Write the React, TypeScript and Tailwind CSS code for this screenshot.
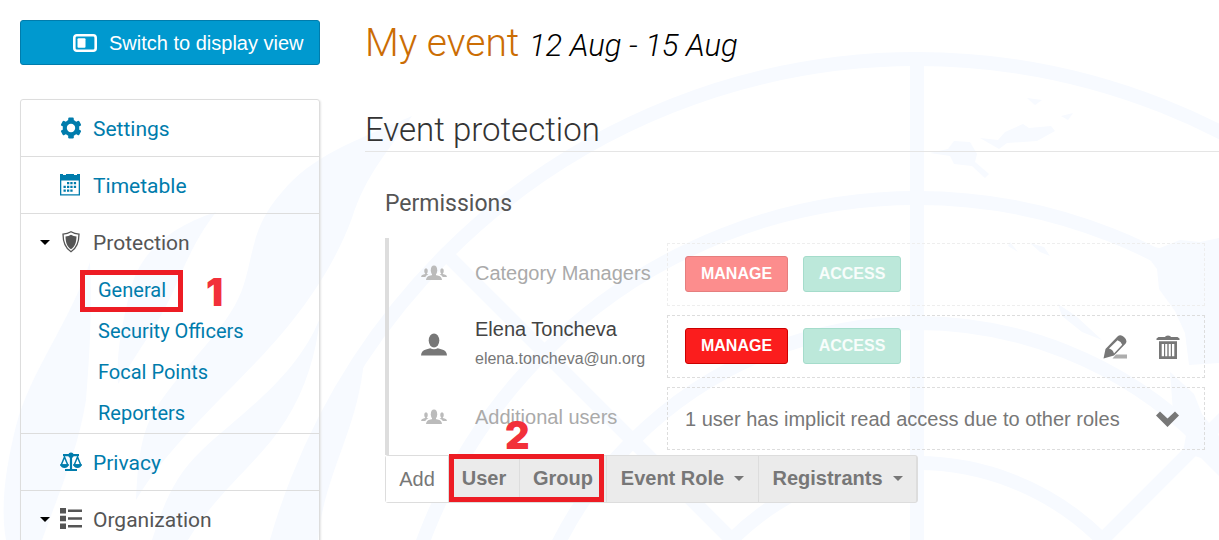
import type { ReactNode } from 'react'

interface IconProps {
  className?: string
}

const WATERMARK = '#f7faff'

function Emblem() {
  return (
    <svg
      className="absolute left-0 top-0 -z-10"
      width="1219"
      height="540"
      viewBox="0 0 1219 540"
      fill="none"
      stroke={WATERMARK}
      strokeWidth="14"
      aria-hidden="true"
    >
      {/* globe */}
      <circle cx="917" cy="725" r="666" />
      <circle cx="917" cy="725" r="527" />
      <circle cx="917" cy="725" r="402" />
      <circle cx="917" cy="725" r="262" />
      <path d="M917 59V540M446 254L732 540M1388 254L1102 540" />
      {/* land */}
      <g fill={WATERMARK} stroke="none">
        <path d="M930 153l18-4 6-8 16 1 7 12-2 8 14 12-4 4-13-12-18-2-4-8z" />
        <path d="M980 138l18 2 7-8 18-8 6 4 22-2 4 5-18 10-30 2-8 6z" />
        <path d="M1027 98l15 2-7 5zM1061 116l12-3-5 7z" />
        <path d="M1140 246l20 2 20-8 20 2 19-4V363l-30 2-4-32-10-22-16-22-2-20z" />
        <path d="M1170 372l24 22 8 20 17 22v40l-18-18-18-6 4-22-14-18z" />
        <path d="M1058 304l18 12 26 24-20-8-20-16zM1010 242l8 10-10-6zM1030 243l14 4 6 9-10-4z" />
      </g>
      {/* olive branch */}
      <g fill={WATERMARK} stroke="none">
        <path d="M412 116c-60 26-100 40-130 76-30 34-28 60-38 92-12 40-50 70-84 118-20 28-22 60-24 98 30-50 80-96 124-142 30-32 70-80 92-140 14-44 36-66 60-102z" />
        <path d="M216 212c-50 16-78 44-86 80-8 32-14 60-12 92 22-36 40-60 54-90 14-32 24-56 44-82z" />
        <path d="M90 262c-20 60-60 110-74 164-10 40-16 80-10 114h36c18-50 36-90 44-140 4-50 6-90 4-138z" />
        <path d="M320 318c-24 60-80 96-118 132-30 28-40 60-50 90h36c30-50 72-78 98-120 20-32 30-66 34-102z" />
        <path d="M364 360c-30 40-44 90-62 120-10 20-16 40-18 60h34c6-66 40-110 46-180z" />
      </g>
    </svg>
  )
}

function DisplayIcon() {
  return (
    <svg width="24" height="18" viewBox="0 0 24 18" aria-hidden="true">
      <rect x="1.3" y="1.3" width="21.400" height="15.400" rx="2.500" fill="none" stroke="currentColor" strokeWidth="2.600" />
      <rect x="4.500" y="4.300" width="8" height="9.400" rx="1" fill="currentColor" />
    </svg>
  )
}

function GearIcon() {
  return (
    <svg width="22" height="22" viewBox="0 0 22 22" aria-hidden="true">
      <g fill="currentColor">
        <rect x="8.200" y=".5" width="5.600" height="21" rx="1.200" />
        <rect x="8.200" y=".5" width="5.600" height="21" rx="1.200" transform="rotate(60 11 11)" />
        <rect x="8.200" y=".5" width="5.600" height="21" rx="1.200" transform="rotate(120 11 11)" />
        <circle cx="11" cy="11" r="8.300" />
      </g>
      <circle cx="11" cy="11" r="4.200" fill="#fff" />
    </svg>
  )
}

function CalendarIcon() {
  return (
    <svg width="22" height="22" viewBox="0 0 22 22" fill="currentColor" aria-hidden="true">
      <path d="M0 0h3v1h3V0h8v1h3V0h3v6H0z" />
      <path fillRule="evenodd" d="M0 6h20v15.500H0zM1.300 6.500v13.700h17.400V6.500z" />
      <path d="M7 8h2.300v2.300H7zM10.300 8h2.300v2.300h-2.300zM13.800 8h2.300v2.300h-2.300zM3.500 11.700h2.300V14H3.500zM7 11.700h2.300V14H7zM10.300 11.700h2.300V14h-2.300zM13.800 11.700h2.300V14h-2.300zM3.500 15.400h2.300v2.300H3.500zM7 15.400h2.300v2.300H7zM10.300 15.400h2.300v2.300h-2.300z" />
    </svg>
  )
}

function ShieldIcon() {
  return (
    <svg width="22" height="22" viewBox="0 0 22 22" aria-hidden="true">
      <path d="M11 .8Q7.500 2.900 3 3.100c0 8 1.500 13.700 8 17.700 6.500-4 8-9.700 8-17.700Q14.500 2.900 11 .8z" fill="none" stroke="currentColor" strokeWidth="1.300" />
      <path d="M11 3.800Q8.500 5.300 5.500 5.500C5.700 12 7 15.500 11 18.200c4-2.700 5.300-6.200 5.500-12.700Q13.500 5.300 11 3.800z" fill="currentColor" />
    </svg>
  )
}

function ScalesIcon() {
  return (
    <svg className="shrink-0" width="22" height="20" viewBox="0 0 22 20" fill="none" stroke="currentColor" aria-hidden="true">
      <path d="M3 3.200h16M11 1v17M5 18h12" strokeWidth="2.200" />
      <circle cx="11" cy="3.200" r="2.600" fill="currentColor" stroke="none" />
      <path d="M4.500 5L1.200 13h6.600zM17.500 5l-3.300 8h6.600z" strokeWidth="1.500" />
      <path d="M0 12.300h9q-.8 3.700-4.500 3.700T0 12.300zM13 12.300h9q-.8 3.700-4.500 3.700T13 12.300z" fill="currentColor" stroke="none" />
    </svg>
  )
}

function ListIcon() {
  return (
    <svg width="22" height="22" viewBox="0 0 22 22" fill="currentColor" aria-hidden="true">
      <path d="M0 0h6v5.500H0zM0 7.800h6v5.500H0zM0 15.600h6v5.500H0zM8 1.500h14V4H8zM8 9.300h14v2.500H8zM8 17.100h14v2.500H8z" />
    </svg>
  )
}

function UserIcon({ className }: IconProps) {
  return (
    <svg className={className} width="26" height="23" viewBox="0 0 26 23" fill="currentColor" aria-hidden="true">
      <ellipse cx="13" cy="7.500" rx="5.300" ry="7" />
      <path d="M0 22.500q.3-5 5-6l4.200-1.200q3.800 1.800 7.600 0L21 16.500q4.700 1 5 6z" />
    </svg>
  )
}

function GroupIcon({ className }: IconProps) {
  return (
    <svg className={className} width="26" height="16" viewBox="0 0 26 16" fill="currentColor" aria-hidden="true">
      <ellipse cx="13" cy="5.200" rx="3.200" ry="4.800" />
      <path d="M11 8h4v3h-4z" />
      <path d="M5 15q.3-3.500 3.500-4.200l3-.8q1.500 1 3 0l3 .8q3.200.7 3.500 4.200z" />
      <ellipse cx="5" cy="6" rx="1.800" ry="2.700" />
      <ellipse cx="21" cy="6" rx="1.800" ry="2.700" />
      <path d="M0 12q.2-1.900 2.500-2.400L4.200 9V7h1.600v2l1.700.6Q5 10.500 4.200 12zM26 12q-.2-1.900-2.500-2.400L21.800 9V7h-1.600v2l-1.700.6q2.500.9 3.300 2.400z" />
    </svg>
  )
}

function PencilIcon() {
  return (
    <svg width="24" height="24" viewBox="0 0 24 24" aria-hidden="true">
      <path d="M13 19.500h11v4H9.500z" fill="currentColor" opacity=".6" />
      <path
        fill="currentColor"
        fillRule="evenodd"
        d="M.5 23.500l2-9.500L14.500 1.500q3-2.500 6.500.5 4 3.500 1.500 6.800L11 20.500zM6 13.500q4 1 5 5l8.200-8.700q-1-3.200-4.700-4.600z"
      />
    </svg>
  )
}

function TrashIcon() {
  return (
    <svg width="24" height="24" viewBox="0 0 24 24" fill="currentColor" aria-hidden="true">
      <path d="M.5 5V3.500L2.500 2H9q.3-1.500 3-1.500T15 2h6.500l2 1.500V5z" />
      <path fillRule="evenodd" d="M3 6.300h18V24H3zM5.700 9v12.300H8V9zM9.200 9v12.300h2.100V9zM12.700 9v12.300h2.100V9zM16 9v12.300h2.300V9z" />
    </svg>
  )
}

function ChevronIcon() {
  return (
    <svg width="24" height="16" viewBox="0 0 24 16" fill="currentColor" aria-hidden="true">
      <path d="M0 4.500L4 .5l7.500 7 7.500-7 4 4L11.500 16z" />
    </svg>
  )
}

function Caret() {
  return (
    <svg width="10" height="5" viewBox="0 0 10 5" fill="currentColor" aria-hidden="true">
      <path d="M0 0h10L5 5z" />
    </svg>
  )
}

interface SectionProps {
  icon: ReactNode
  label: string
}

function MenuLink({ icon, label }: SectionProps) {
  return (
    <a href="#" className="flex h-[57px] items-center gap-[11px] pl-[39px] text-[#007cac]">
      <span className="flex w-[22px]">{icon}</span>
      <span className="pt-[3px]">{label}</span>
    </a>
  )
}

function MenuGroup({ icon, label }: SectionProps) {
  return (
    <button className="flex h-14 w-full items-center gap-[11px] pl-[19px] text-[#555]">
      <span className="flex items-center gap-[10px]">
        <span className="text-black"><Caret /></span>
        <span className="flex w-[22px]">{icon}</span>
      </span>
      <span className="pt-[3px]">{label}</span>
    </button>
  )
}

const protectionLinks = ['General', 'Security Officers', 'Focal Points', 'Reporters']

function Sidebar() {
  return (
    <aside className="w-[300px] shrink-0">
      <button className="flex h-[45px] w-full items-center gap-3 rounded-[3px] border border-[#007cac] bg-[#0099cf] pl-[52px] font-['Liberation_Sans',sans-serif] text-xl text-white">
        <DisplayIcon />
        Switch to display view
      </button>
      <nav className="mt-[34px] divide-y divide-[#ddd] rounded-[3px] border border-[#ddd] text-[21px] shadow-[1px_1px_2px_#e5e5e5]">
        <MenuLink icon={<GearIcon />} label="Settings" />
        <MenuLink icon={<CalendarIcon />} label="Timetable" />
        <div>
          <MenuGroup icon={<ShieldIcon />} label="Protection" />
          <ul className="grid h-[163px] grid-rows-4 text-xl">
            {protectionLinks.map((label, i) => (
              <li key={label} className="relative flex items-center pl-[77px]">
                <a href="#" className="text-[#007cac]">{label}</a>
                {i === 0 && (
                  <>
                    <span className="absolute left-[59px] top-0 h-[42px] w-[103px] border-5 border-[#ed1c24]" />
                    <span className="absolute left-[185px] top-px font-[Inter,sans-serif] text-[38px] font-black leading-[42px] text-[#f2303a]">1</span>
                  </>
                )}
              </li>
            ))}
          </ul>
        </div>
        <MenuLink icon={<ScalesIcon />} label="Privacy" />
        <MenuGroup icon={<ListIcon />} label="Organization" />
      </nav>
    </aside>
  )
}

interface RoleProps {
  name: string
  faded?: boolean
}

function Roles({ name, faded }: RoleProps) {
  return (
    <div className="flex gap-[15px] pb-0.5 text-base font-bold text-white">
      <button
        aria-label={`Manage, ${name}`}
        className={`h-9 w-[103px] rounded-[3px] border border-[#c00] bg-[#fb1d1d] ${faded ? 'opacity-50' : ''}`}
      >
        MANAGE
      </button>
      <button
        aria-label={`Access, ${name}`}
        className="h-9 w-[98px] rounded-[3px] border border-[#a5dccb] bg-[#bce8da] text-white/90"
      >
        ACCESS
      </button>
    </div>
  )
}

interface RowProps {
  icon: ReactNode
  title: ReactNode
  faded?: boolean
  children: ReactNode
}

function PermissionRow({ icon, title, faded, children }: RowProps) {
  return (
    <li className="flex h-[63px] items-center">
      <div className="flex w-[278px] shrink-0 items-center gap-7 pb-1 pl-8">
        {icon}
        <div>{title}</div>
      </div>
      <div className={`flex h-full flex-1 items-center justify-between border border-dashed pl-[17px] pr-6 ${faded ? 'border-[#eee]' : 'border-[#ddd]'}`}>
        {children}
      </div>
    </li>
  )
}

function Permissions() {
  return (
    <section className="mt-[34px] pl-5 pr-[14px] font-['Liberation_Sans',sans-serif]">
      <h3 className="font-[Roboto,sans-serif] text-[23px] leading-9 text-[#555]">Permissions</h3>
      <ul className="mt-4 space-y-[9px] border-l-4 border-[#ddd] pb-[5px] pt-[5px] text-xl text-[#777]">
        <PermissionRow
          faded
          icon={<GroupIcon className="text-[#bbb]" />}
          title={<p className="text-[#aaa]">Category Managers</p>}
        >
          <Roles name="Category Managers" faded />
        </PermissionRow>
        <PermissionRow
          icon={<UserIcon className="text-[#777]" />}
          title={
            <>
              <p className="text-[#444]">Elena Toncheva</p>
              <p className="text-base leading-8">elena.toncheva@un.org</p>
            </>
          }
        >
          <Roles name="Elena Toncheva" />
          <div className="flex items-center gap-[29px]">
            <button aria-label="Edit"><PencilIcon /></button>
            <button aria-label="Remove"><TrashIcon /></button>
          </div>
        </PermissionRow>
        <PermissionRow
          icon={<GroupIcon className="text-[#bbb]" />}
          title={<p className="text-[#aaa]">Additional users</p>}
        >
          <p>1 user has implicit read access due to other roles</p>
          <button aria-label="Show users"><ChevronIcon /></button>
        </PermissionRow>
      </ul>
      <div className="relative flex h-12 w-max divide-x divide-[#ddd] rounded-[3px] border border-[#ddd] bg-[#ebebeb] text-xl font-bold text-[#777]">
        <span className="flex w-[63px] items-center justify-center bg-white font-normal">Add</span>
        <button className="w-[71px] pb-0.5">User</button>
        <button className="w-[87px] pb-0.5">Group</button>
        <button className="flex w-[152px] items-center justify-center gap-[10px] pb-0.5">Event Role <Caret /></button>
        <button className="flex w-[158px] items-center justify-center gap-[10px] pb-0.5">Registrants <Caret /></button>
        <span className="absolute -top-[2px] left-[63px] h-12 w-[155px] border-5 border-[#ed1c24]" />
        <span className="absolute -top-[42px] left-[119px] font-[Inter,sans-serif] text-[38px] font-black leading-[42px] text-[#f2303a]">2</span>
      </div>
    </section>
  )
}

export default function App() {
  return (
    <div className="relative isolate flex h-screen gap-[45px] overflow-hidden bg-white pl-5 pt-5 font-[Roboto,sans-serif]">
      <Emblem />
      <Sidebar />
      <main className="min-w-0 flex-1">
        <h1 className="pt-px text-[39px] font-light leading-[45px] text-[#cb6d04]">
          My event <em className="text-[31px] text-black">12 Aug - 15 Aug</em>
        </h1>
        <h2 className="mt-10 border-b border-[#e5e5e5] text-[33px] font-light leading-[43px] text-[#333]">
          Event protection
        </h2>
        <Permissions />
      </main>
    </div>
  )
}
